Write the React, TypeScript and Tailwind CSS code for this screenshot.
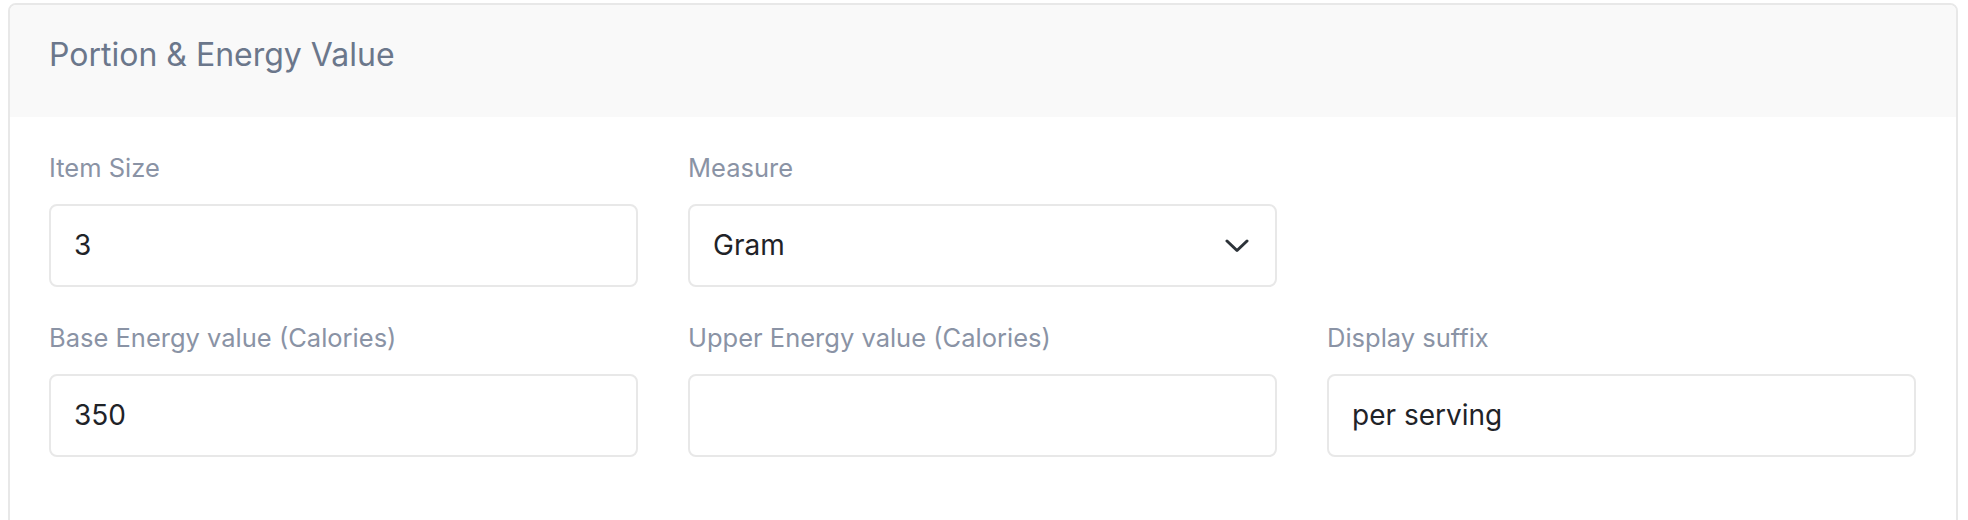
const fields = [
  { label: 'Item Size', value: '3' },
  { label: 'Measure', value: 'Gram', select: true },
  null,
  { label: 'Base Energy value (Calories)', value: '350' },
  { label: 'Upper Energy value (Calories)', value: '' },
  { label: 'Display suffix', value: 'per serving' },
];

type Field = { label: string; value: string; select?: boolean };

const FormField = ({ field }: { field: Field }) => (
  <div className="flex flex-col">
    <label className="text-[25.5px] leading-[36px] text-[#8a93a5] mb-[18px]">{field.label}</label>
    <div className="h-[83px] border-2 border-[#e8e8e8] rounded-[8px] bg-white flex items-center justify-between pl-[23px] pr-[26px] pb-[2px]">
      <span className="text-[28px] text-[#1f2328]">{field.value}</span>
      {field.select && (
        <svg width="24" height="14" viewBox="0 0 24 14" fill="none" className="mt-[2px]">
          <polyline
            points="2,2 12,11.5 22,2"
            stroke="#2d3339"
            strokeWidth="3"
            strokeLinecap="round"
            strokeLinejoin="round"
          />
        </svg>
      )}
    </div>
  </div>
);

const App = () => {
  return (
    <div className="w-[1968px] h-[520px] overflow-hidden bg-white pt-[3px] pl-[8px] font-['Inter',sans-serif]">
      <div className="w-[1950px] border-2 border-[#e8e8e8] rounded-[8px] overflow-hidden">
        {/* Header */}
        <div className="h-[112px] bg-[#f9f9f9] pl-[39px] pt-[27px]">
          <h2 className="text-[32px] leading-[45px] font-normal text-[#6b778b]">Portion &amp; Energy Value</h2>
        </div>

        {/* Body */}
        <div className="grid grid-cols-3 gap-x-[50px] gap-y-[33px] pl-[39px] pr-[40px] pt-[33px] pb-[80px]">
          {fields.map((f, i) => (f ? <FormField key={i} field={f} /> : <div key={i} />))}
        </div>
      </div>
    </div>
  );
};

export default App;
